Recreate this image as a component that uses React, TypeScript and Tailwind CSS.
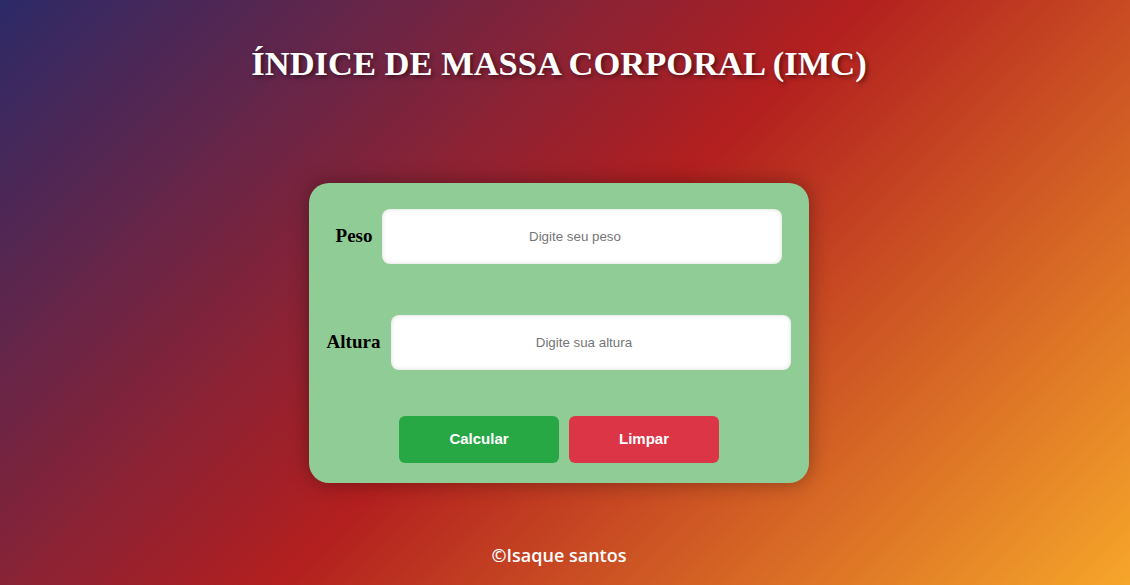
import { useState } from "react";

export default function App() {
	const [peso, setPeso] = useState("");
	const [altura, setAltura] = useState("");

	const limpar = () => {
		setPeso("");
		setAltura("");
	};

	return (
		<div className="h-[585px] w-full overflow-hidden bg-[linear-gradient(135deg,#2c2a68_0%,#b21f1f_50%,#f6a62a_100%)]">
			<div className="flex w-[1118px] flex-col items-center pt-[43px]">
				<h1 className="text-[34.5px] leading-[40px] font-bold text-white [font-family:'Liberation_Serif',serif] [text-shadow:2px_2px_4px_rgba(0,0,0,0.5)]">
					ÍNDICE DE MASSA CORPORAL (IMC)
				</h1>

				{/* Card */}
				<div className="mt-[100px] flex h-[300px] w-[500px] flex-col items-center rounded-[20px] bg-[#90cd96] pt-[26px] shadow-[0_0_20px_rgba(0,0,0,0.35)]">
					<div className="flex h-[55px] items-center gap-[10px]">
						<label className="text-[19px] font-bold text-black [font-family:'Liberation_Serif',serif]">
							Peso
						</label>
						<input
							value={peso}
							onChange={(e) => setPeso(e.target.value)}
							placeholder="Digite seu peso"
							className="h-[55px] w-[400px] rounded-[8px] bg-white pr-[15px] text-center text-[13.33px] text-black outline-none placeholder:text-[#757575] [font-family:'Liberation_Sans',Arial,sans-serif] shadow-[inset_0_0_4px_rgba(0,0,0,0.15)]"
						/>
					</div>

					<div className="mt-[51px] flex h-[55px] items-center gap-[11px]">
						<label className="text-[19px] font-bold text-black [font-family:'Liberation_Serif',serif]">
							Altura
						</label>
						<input
							value={altura}
							onChange={(e) => setAltura(e.target.value)}
							placeholder="Digite sua altura"
							className="h-[55px] w-[400px] rounded-[8px] bg-white pr-[15px] text-center text-[13.33px] text-black outline-none placeholder:text-[#757575] [font-family:'Liberation_Sans',Arial,sans-serif] shadow-[inset_0_0_4px_rgba(0,0,0,0.15)]"
						/>
					</div>

					<div className="mt-[46px] flex gap-[10px] [font-family:'Liberation_Sans',Arial,sans-serif]">
						<button className="h-[47px] w-[160px] rounded-[6px] bg-[#28a745] text-[15px] font-bold text-white">
							Calcular
						</button>
						<button
							onClick={limpar}
							className="h-[47px] w-[150px] rounded-[6px] bg-[#dc3545] text-[15px] font-bold text-white"
						>
							Limpar
						</button>
					</div>
				</div>

				<footer className="mt-[60px] text-[18px] leading-[24px] font-semibold text-white [font-family:'Open_Sans',sans-serif]">
					©Isaque santos
				</footer>
			</div>
		</div>
	);
}
